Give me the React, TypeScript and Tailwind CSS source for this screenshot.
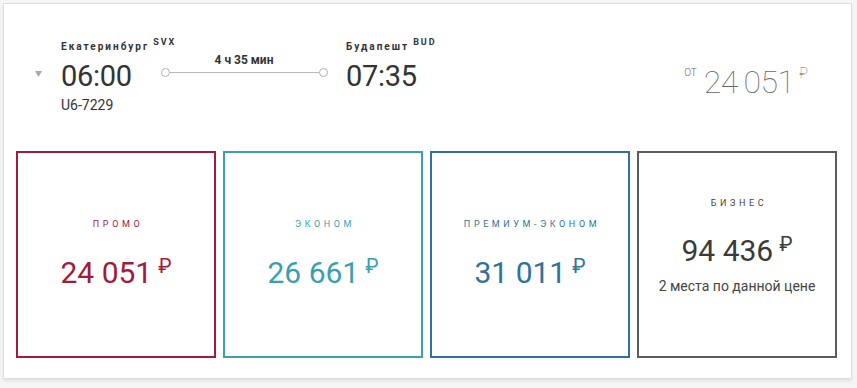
import React from "react";

function Fare({
  label,
  price,
  color,
  border,
  labelColor,
  extra,
}: {
  label: string;
  price: string;
  color: string;
  border: string;
  labelColor: string;
  extra?: string;
}) {
  return (
    <div className={`w-[200px] h-[207px] border-2 ${border} flex flex-col items-center justify-center ${extra ? "pb-[16px]" : ""}`}>
      <div className={`text-[9px] leading-[12px] tracking-[3.6px] pl-[4px] ${labelColor}`}>{label}</div>
      <div className={`flex items-start ${extra ? "mt-[24px]" : "mt-[25px]"} ${color}`}>
        <span className="text-[30px] leading-[36px]">{price}</span>
        <span className="text-[20px] leading-[20px] ml-[6px] mt-[1px]">₽</span>
      </div>
      {extra && <div className="text-[14px] leading-[20px] text-[#444] mt-[7px]">{extra}</div>}
    </div>
  );
}

export default function App() {
  return (
    <div className="w-[857px] h-[388px] bg-[#f5f5f5] pt-[3px] pl-[3px]" style={{ fontFamily: "Roboto, 'Noto Sans', sans-serif" }}>
      <div className="w-[849px] h-[376px] bg-white border border-[#dedede] shadow-[0_2px_3px_rgba(0,0,0,0.08)]">
        <div className="flex h-[147px] items-start text-[#333]">
          <div className="w-[57px] pt-[67px] pl-[31px]">
            <svg width="7" height="6" viewBox="0 0 7 6"><path d="M0 0 L7 0 L3.5 6 Z" fill="#a8a8a8" /></svg>
          </div>
          <div className="w-[100px] pt-[33px]">
            <div className="flex items-start">
              <span className="text-[10px] leading-[12px] font-bold tracking-[2px] mt-[4px]">Екатеринбург</span>
              <span className="text-[9px] leading-[10px] font-bold tracking-[2px] ml-[4px]">SVX</span>
            </div>
            <div className="text-[29px] leading-[36px] mt-[5px] tracking-[-0.3px]">06:00</div>
            <div className="text-[14px] leading-[20px] mt-[1px]">U6-7229</div>
          </div>
          <div className="w-[166px] pt-[49px] flex flex-col items-center">
            <div className="text-[12px] leading-[14px] font-bold">4 ч 35 мин</div>
            <div className="flex items-center w-[167px] mt-[1px]">
              <div className="w-[9px] h-[9px] rounded-full border border-[#b0b0b0] bg-white shrink-0" />
              <div className="flex-1 h-px bg-[#b8b8b8]" />
              <div className="w-[9px] h-[9px] rounded-full border border-[#b0b0b0] bg-white shrink-0" />
            </div>
          </div>
          <div className="pt-[33px] ml-[19px]">
            <div className="flex items-start">
              <span className="text-[10px] leading-[12px] font-bold tracking-[2px] mt-[4px]">Будапешт</span>
              <span className="text-[9px] leading-[10px] font-bold tracking-[2px] ml-[4px]">BUD</span>
            </div>
            <div className="text-[29px] leading-[36px] mt-[5px] tracking-[-0.3px]">07:35</div>
          </div>
          <div className="ml-auto mr-[43px] pt-[61px] flex items-start text-[#666]">
            <span className="text-[10px] leading-[12px] mt-[2px] mr-[7px] font-light">ОТ</span>
            <span className="text-[32px] leading-[34px] font-thin tracking-[-0.6px]">24&#8201;051</span>
            <span className="text-[14px] leading-[14px] font-thin ml-[5px] mt-[1px]">₽</span>
          </div>
        </div>
        <div className="flex gap-[7px] pl-[12px]">
          <Fare label="ПРОМО" price="24 051" color="text-[#a21a3c]" border="border-[#a21a3c]" labelColor="text-[#a21a3c]" />
          <Fare label="ЭКОНОМ" price="26 661" color="text-[#3aa0ad]" border="border-[#3aa0ad]" labelColor="text-[#3aa0ad]" />
          <Fare label="ПРЕМИУМ-ЭКОНОМ" price="31 011" color="text-[#2f729b]" border="border-[#2f729b]" labelColor="text-[#2f729b]" />
          <Fare label="БИЗНЕС" price="94 436" color="text-[#3a3a3a]" border="border-[#5c5c5c]" labelColor="text-[#444]" extra="2 места по данной цене" />
        </div>
      </div>
    </div>
  );
}
